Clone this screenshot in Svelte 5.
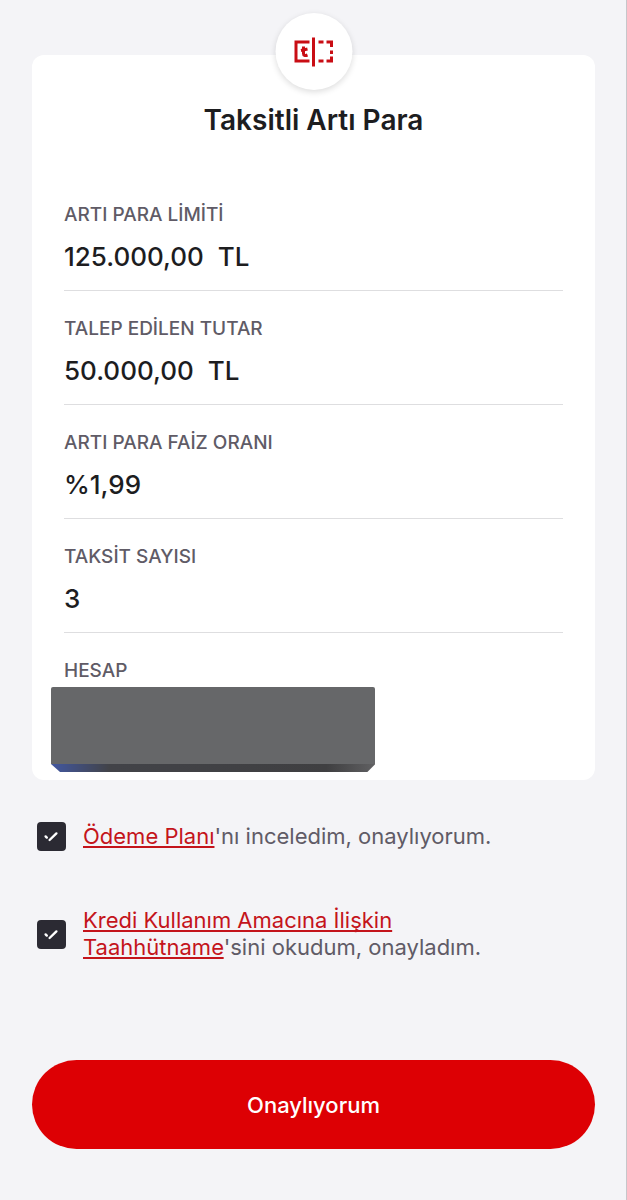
<script lang="ts">
  const rows = [
    { label: "ARTI PARA LİMİTİ", value: "125.000,00", unit: "TL" },
    { label: "TALEP EDİLEN TUTAR", value: "50.000,00", unit: "TL" },
    { label: "ARTI PARA FAİZ ORANI", value: "%1,99" },
    { label: "TAKSİT SAYISI", value: "3" },
  ];

  let planAccepted = $state(true);
  let pledgeAccepted = $state(true);
</script>

{#snippet tick()}
  <svg class="tick" viewBox="0 0 29 29" aria-hidden="true">
    <path d="M8.600 14.400l1.200 1.200M12.600 18l6.800-6.600" />
  </svg>
{/snippet}

<main>
  <section class="card">
    <div class="badge">
      <svg viewBox="0 0 40 32" width="40" height="32" aria-hidden="true">
        <path d="M16 6H2.500v19H16" />
        <path d="M20 1.500v29" />
        <path d="M25 6h5M33 6h5v5M38 14.500v3.500M38 20.500V25h-5M30 25h-5" />
        <path class="letter" d="M10 10.500v7q0 3 4 1.500M7.500 14.500l6.500-1.500" />
      </svg>
    </div>

    <h1>Taksitli Artı Para</h1>

    <dl>
      {#each rows as row}
        <div class="row">
          <dt>{row.label}</dt>
          <dd>
            <span>{row.value}</span>
            {#if row.unit}<span>{row.unit}</span>{/if}
          </dd>
        </div>
      {/each}
      <div class="row account">
        <dt>HESAP</dt>
        <dd class="mask"></dd>
      </div>
    </dl>
  </section>

  <div class="consents">
    <div class="consent">
      <span class="box">
        <input type="checkbox" aria-labelledby="plan-text" bind:checked={planAccepted} />
        {@render tick()}
      </span>
      <p id="plan-text"><a href="#plan">Ödeme Planı</a>'nı inceledim, onaylıyorum.</p>
    </div>
    <div class="consent">
      <span class="box">
        <input type="checkbox" aria-labelledby="pledge-text" bind:checked={pledgeAccepted} />
        {@render tick()}
      </span>
      <p id="pledge-text">
        <a href="#pledge">Kredi Kullanım Amacına İlişkin<br />Taahhütname</a>'sini okudum, onayladım.
      </p>
    </div>
  </div>

  <button type="button" disabled={!planAccepted || !pledgeAccepted}>Onaylıyorum</button>
</main>

<style>
  :global(body) {
    margin: 0;
    background: #f4f4f7;
  }

  main {
    box-sizing: border-box;
    min-height: 100vh;
    padding: 55px 31px 51px 32px;
    border-right: 1px solid #c6c6ca;
    display: flex;
    flex-direction: column;
    font-family: Inter, "Noto Sans", sans-serif;
    color: #1d1d1f;
  }

  .card {
    position: relative;
    padding: 45px 32px 8px;
    background: #fff;
    border-radius: 12px;
  }

  .badge {
    position: absolute;
    top: -42px;
    left: 50%;
    transform: translateX(-50%);
    width: 77px;
    height: 77px;
    border-radius: 50%;
    background: #fff;
    box-shadow: 0 2px 6px rgba(0, 0, 0, 0.14);
    display: flex;
    align-items: center;
    justify-content: center;
  }

  .badge path {
    fill: none;
    stroke: #c90d14;
    stroke-width: 3;
  }

  h1 {
    margin: 0;
    font-size: 28px;
    line-height: 40px;
    font-weight: 600;
    text-align: center;
  }

  dl { margin: 37px 0 0; }

  .row {
    padding: 26px 0 17px;
    border-bottom: 1px solid #dedee0;
  }

  dt {
    font-size: 19px;
    line-height: 24px;
    font-weight: 500;
    color: #605b66;
  }

  dd {
    margin: 14px 0 0;
    display: flex;
    gap: 14px;
    font-size: 26px;
    line-height: 32px;
    font-weight: 500;
  }

  .account {
    padding-bottom: 0;
    border-bottom: 0;
  }

  .mask {
    width: 65%;
    height: 85px;
    margin: 4px 0 0 -13px;
    border-radius: 2px;
    background:
      linear-gradient(90deg, #4257a0, #424348 18%, #3f3f41 85%, #606062) bottom / 100% 8px no-repeat,
      #666769;
    clip-path: polygon(0 0, 100% 0, 100% 77px, calc(100% - 8px) 100%, 9px 100%, 0 77px);
  }

  .consents {
    margin: 42px 0 0 5px;
    display: flex;
    flex-direction: column;
    gap: 56px;
  }

  .consent {
    display: flex;
    align-items: center;
    gap: 17px;
  }

  .box {
    position: relative;
    flex: none;
    width: 29px;
    height: 29px;
  }

  input {
    appearance: none;
    display: block;
    width: 29px;
    height: 29px;
    margin: 0;
    border: 2px solid #2b2a33;
    border-radius: 4px;
  }

  input:checked { background: #2b2a33; }

  .tick {
    position: absolute;
    inset: 0;
    fill: none;
    stroke: #fff;
    stroke-width: 2.4;
    stroke-linecap: round;
    pointer-events: none;
  }

  p {
    margin: 0;
    font-size: 22px;
    line-height: 27px;
    color: #605b66;
  }

  a {
    color: #c4141b;
    text-decoration-thickness: 2px;
    text-underline-offset: 2px;
    text-decoration-skip-ink: none;
  }

  button {
    margin-top: auto;
    height: 89px;
    border: 0;
    border-radius: 45px;
    background: #dd0004;
    color: #fff;
    font: 500 22px/28px Inter, "Noto Sans", sans-serif;
  }
</style>
